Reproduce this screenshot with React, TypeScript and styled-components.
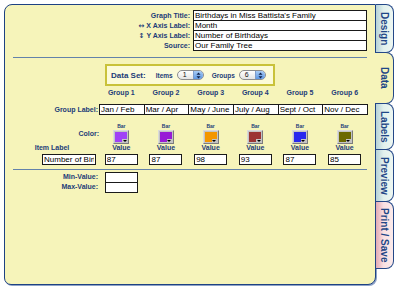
import styled, { createGlobalStyle, css } from "styled-components";

const GlobalStyle = createGlobalStyle`
  html, body {
    margin: 0;
    background: #ffffff;
    font-family: "Liberation Sans", Arial, sans-serif;
  }
`;

const navy = "#1d3c78";
const panelBg = "#f6f4ba";

const Screen = styled.div`
  display: flex;
  align-items: flex-start;
  padding: 4px 0 0 4px;
  width: 400px;
  height: 292px;
  box-sizing: border-box;
`;

const Panel = styled.section`
  width: 372px;
  height: 281px;
  box-sizing: border-box;
  background: ${panelBg};
  border: 1px solid #1e4283;
  border-radius: 8px 0 8px 7px;
  box-shadow: 1px 1px 0 #8ea2c8;
  padding-top: 5px;
`;

const TitleGrid = styled.div`
  display: grid;
  grid-template-columns: 185px 174px;
  grid-auto-rows: 10px;
  column-gap: 3px;
`;

const Label = styled.label`
  font-size: 7px;
  font-weight: bold;
  color: ${navy};
  line-height: 11px;
  text-align: right;
  white-space: nowrap;
`;

const Arrow = styled.span`
  font-family: "DejaVu Sans", sans-serif;
  font-size: 7px;
  margin-right: 2px;
`;

const TextBox = styled.input<{ $w?: number }>`
  box-sizing: border-box;
  height: 11px;
  width: ${(p) => (p.$w ? `${p.$w}px` : "100%")};
  margin: 0;
  padding: 0 1px;
  border: 1px solid #1a1a1a;
  background: #ffffff;
  font-family: "Liberation Sans", Arial, sans-serif;
  font-size: 8px;
  line-height: 9px;
  color: #000;
  outline: none;
  position: relative;
`;

const Rule = styled.hr<{ $top: number }>`
  height: 1px;
  border: 0;
  background: #6382aa;
  margin: ${(p) => p.$top}px 8px 0 8px;
`;

const DataSetBox = styled.div`
  width: 170px;
  height: 22px;
  box-sizing: border-box;
  margin: 6px auto 0;
  border: 2px solid #c9c23a;
  background: #fcfbd9;
  display: flex;
  align-items: center;
  padding: 0 5px 0 4px;
`;

const BoxTitle = styled.span`
  font-size: 8px;
  font-weight: bold;
  color: ${navy};
  margin-right: 10px;
`;

const SmallLabel = styled.span<{ $gapLeft?: number }>`
  font-size: 6.5px;
  font-weight: bold;
  color: ${navy};
  margin-left: ${(p) => p.$gapLeft || 0}px;
  margin-right: 4px;
`;

const Stepper = styled.div`
  display: flex;
  width: 27px;
  height: 10px;
  box-sizing: border-box;
  border: 1px solid #8d8d8d;
  border-radius: 5px;
  overflow: hidden;
  background: linear-gradient(#ffffff, #e4e4e4);
`;

const StepValue = styled.span`
  flex: 1;
  font-size: 7px;
  line-height: 8px;
  padding-left: 5px;
  color: #111;
`;

const StepArrows = styled.span`
  width: 9px;
  display: flex;
  align-items: center;
  justify-content: center;
  background: linear-gradient(#a8cbf4, #5e97e2);
  border-left: 1px solid #7c9ccc;
`;

function Spinner({ value }: { value: string }) {
  return (
    <Stepper>
      <StepValue>{value}</StepValue>
      <StepArrows>
        <svg width="5" height="7" viewBox="0 0 5 7">
          <path d="M2.5 0.5 L4.5 2.8 L0.5 2.8 Z" fill="#10204a" />
          <path d="M2.5 6.5 L4.5 4.2 L0.5 4.2 Z" fill="#10204a" />
        </svg>
      </StepArrows>
    </Stepper>
  );
}

const GroupRow = styled.div<{ $h: number; $top: number; $items?: string }>`
  display: grid;
  grid-template-columns: 94px repeat(6, 44.67px);
  grid-auto-rows: ${(p) => p.$h}px;
  margin-top: ${(p) => p.$top}px;
  align-items: ${(p) => p.$items || "center"};
`;

const GroupHead = styled.span`
  font-size: 7px;
  font-weight: bold;
  color: ${navy};
  text-align: center;
  line-height: 8px;
`;

const RowLabel = styled(Label)<{ $pad?: number; $top?: number }>`
  line-height: 8px;
  padding-right: ${(p) => p.$pad ?? 1}px;
  margin-top: ${(p) => p.$top || 0}px;
  align-self: ${(p) => (p.$top ? "start" : "center")};
`;

const WideBox = styled(TextBox)`
  width: calc(100% + 1px);
`;

const CenterCell = styled.div`
  display: flex;
  flex-direction: column;
  align-items: center;
`;

const EndCell = styled.div`
  display: flex;
  justify-content: flex-end;
  padding-right: 3px;
`;

const BarTag = styled.span`
  font-size: 5px;
  font-weight: bold;
  color: ${navy};
  line-height: 6px;
  height: 7px;
`;

const Swatch = styled.div<{ $color: string }>`
  position: relative;
  width: 16px;
  height: 14px;
  box-sizing: border-box;
  border: 1px solid;
  border-color: #dadada #7c7c7c #7c7c7c #dadada;
  background: #c4c4c4;
  padding: 1px;

  &::before {
    content: "";
    display: block;
    width: 100%;
    height: 100%;
    background: ${(p) => p.$color};
  }
`;

const Notch = styled.span`
  position: absolute;
  right: 1px;
  bottom: 1px;
  width: 5px;
  height: 3px;
  background: #c4c4c4;
  display: flex;
  align-items: center;
  justify-content: center;

  &::after {
    content: "";
    width: 0;
    height: 0;
    border-left: 2px solid transparent;
    border-right: 2px solid transparent;
    border-top: 2px solid #000;
  }
`;

const ColorPicker = ({ color }: { color: string }) => (
  <Swatch $color={color}>
    <Notch />
  </Swatch>
);

const RangeRows = styled.div`
  display: grid;
  grid-template-columns: 94px 44.67px;
  grid-auto-rows: 10px;
  margin-top: 2px;
  align-items: start;
`;

const TabColumn = styled.nav`
  display: flex;
  flex-direction: column;
`;

const Tab = styled.div<{ $h: number; $active?: boolean; $pink?: boolean }>`
  height: ${(p) => p.$h}px;
  width: 18px;
  box-sizing: border-box;
  margin-top: -1px;
  border: 1px solid #244888;
  border-left: none;
  border-radius: 0 8px 8px 0;
  display: flex;
  align-items: center;
  justify-content: center;
  writing-mode: vertical-rl;
  font-size: 10px;
  font-weight: bold;
  color: #1f4787;
  background: ${(p) =>
    p.$active
      ? panelBg
      : p.$pink
      ? "linear-gradient(to right, #e3aab4, #f9e1e3 45%, #fbeaea)"
      : "linear-gradient(to right, #b6d2d8, #e2f1ed 45%, #eef7f2)"};
  ${(p) =>
    p.$active &&
    css`
      width: 19px;
      margin-left: -1px;
    `}
  &:first-child {
    margin-top: 0;
  }
`;

const groups = [
  { name: "Group 1", label: "Jan / Feb", color: "#a040f6", value: "87" },
  { name: "Group 2", label: "Mar / Apr", color: "#981ad6", value: "87" },
  { name: "Group 3", label: "May / June", color: "#f39600", value: "98" },
  { name: "Group 4", label: "July / Aug", color: "#9c3434", value: "93" },
  { name: "Group 5", label: "Sept / Oct", color: "#2828ee", value: "87" },
  { name: "Group 6", label: "Nov / Dec", color: "#6c6a00", value: "85" },
];

export default function App() {
  return (
    <>
      <GlobalStyle />
      <Screen>
        <Panel>
          <TitleGrid>
            <Label>Graph Title:</Label>
            <TextBox readOnly value="Birthdays in Miss Battista's Family" />
            <Label>
              <Arrow>↔</Arrow>X Axis Label:
            </Label>
            <TextBox readOnly value="Month" />
            <Label>
              <Arrow>↕</Arrow>Y Axis Label:
            </Label>
            <TextBox readOnly value="Number of Birthdays" />
            <Label>Source:</Label>
            <TextBox readOnly value="Our Family Tree" />
          </TitleGrid>

          <Rule $top={7} />

          <DataSetBox>
            <BoxTitle>Data Set:</BoxTitle>
            <SmallLabel>Items</SmallLabel>
            <Spinner value="1" />
            <SmallLabel $gapLeft={8}>Groups</SmallLabel>
            <Spinner value="6" />
          </DataSetBox>

          <GroupRow $h={8} $top={3}>
            <span />
            {groups.map((g) => (
              <GroupHead key={g.name}>{g.name}</GroupHead>
            ))}
          </GroupRow>

          <GroupRow $h={11} $top={7}>
            <RowLabel>Group Label:</RowLabel>
            {groups.map((g) => (
              <WideBox key={g.name} readOnly value={g.label} />
            ))}
          </GroupRow>

          <GroupRow $h={21} $top={8} $items="start">
            <RowLabel $top={7} $pad={0}>
              Color:
            </RowLabel>
            {groups.map((g) => (
              <CenterCell key={g.name}>
                <BarTag>Bar</BarTag>
                <ColorPicker color={g.color} />
              </CenterCell>
            ))}
          </GroupRow>

          <GroupRow $h={8} $top={0}>
            <GroupHead>Item Label</GroupHead>
            {groups.map((g) => (
              <GroupHead key={g.name}>Value</GroupHead>
            ))}
          </GroupRow>

          <GroupRow $h={11} $top={2}>
            <EndCell>
              <TextBox $w={54} readOnly value="Number of Birthdays" />
            </EndCell>
            {groups.map((g) => (
              <CenterCell key={g.name}>
                <TextBox $w={33} readOnly value={g.value} />
              </CenterCell>
            ))}
          </GroupRow>

          <Rule $top={4} />

          <RangeRows>
            <RowLabel>Min-Value:</RowLabel>
            <CenterCell>
              <TextBox $w={33} readOnly value="" />
            </CenterCell>
            <RowLabel>Max-Value:</RowLabel>
            <CenterCell>
              <TextBox $w={33} readOnly value="" />
            </CenterCell>
          </RangeRows>
        </Panel>

        <TabColumn>
          <Tab $h={49}>Design</Tab>
          <Tab $h={52} $active>
            Data
          </Tab>
          <Tab $h={47}>Labels</Tab>
          <Tab $h={53}>Preview</Tab>
          <Tab $h={68} $pink>
            Print / Save
          </Tab>
        </TabColumn>
      </Screen>
    </>
  );
}
